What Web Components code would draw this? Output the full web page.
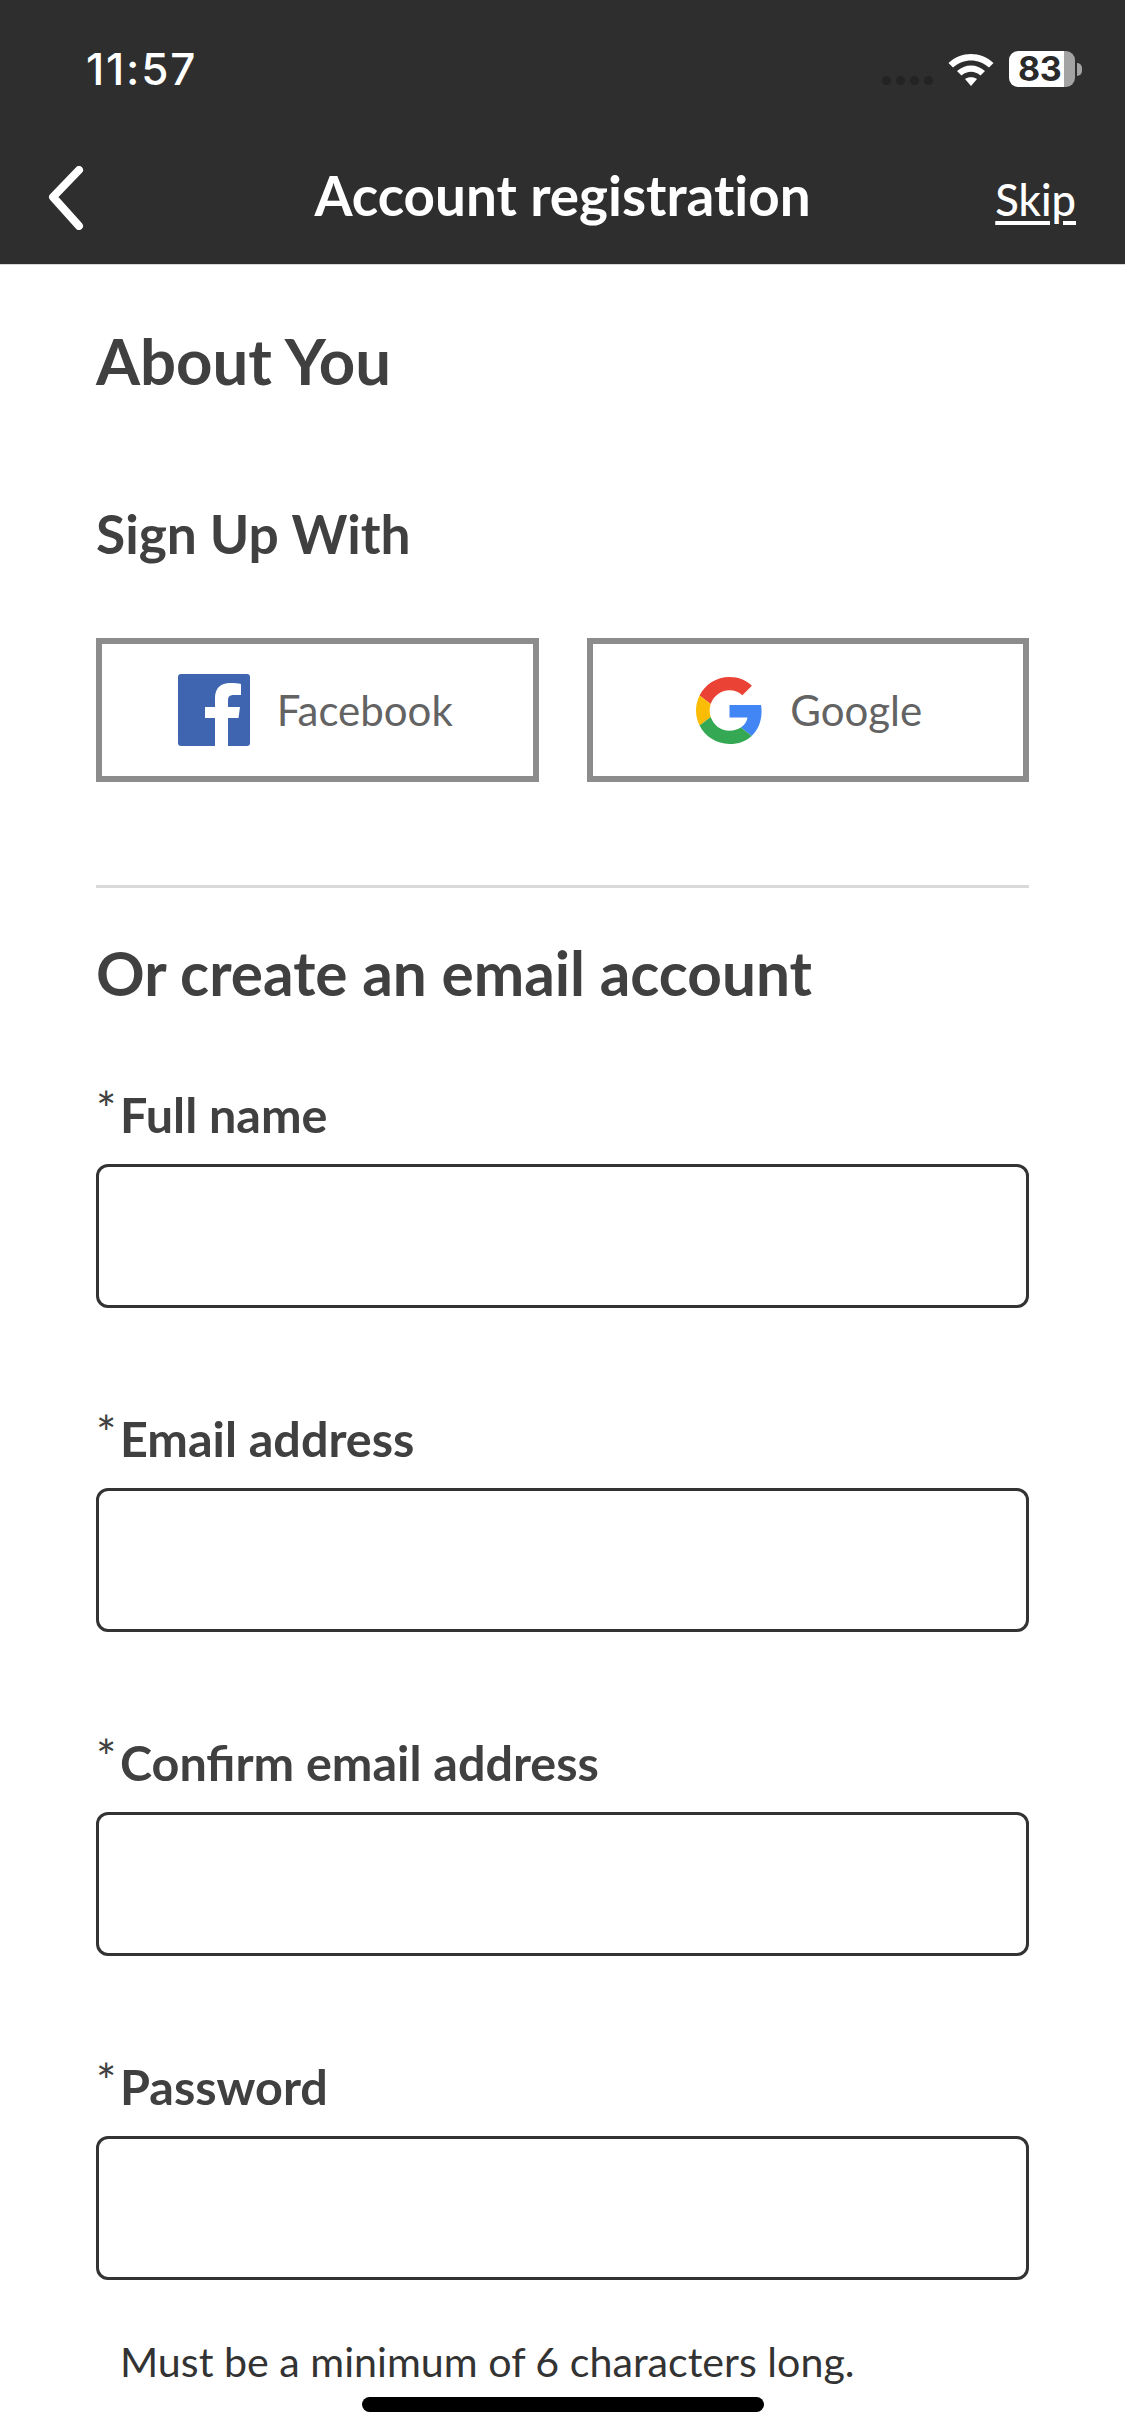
<!DOCTYPE html>
<html lang="en"><head><meta charset="utf-8"><title>Account registration</title>
<style>
html,body{margin:0;padding:0;background:#fff}
body{width:1125px;height:2436px;overflow:hidden;font-family:Lato,"Open Sans",sans-serif;color:#3d3d3d;position:relative}
</style></head><body>
<app-header title="Account registration" action="Skip" time="11:57" battery="83"></app-header>
<page-main>
  <section-title level="1">About You</section-title>
  <section-title level="2">Sign Up With</section-title>
  <social-row>
    <social-button name="facebook">Facebook</social-button>
    <social-button name="google">Google</social-button>
  </social-row>
  <h-divider></h-divider>
  <section-title level="3">Or create an email account</section-title>
  <form-field>Full name</form-field>
  <form-field>Email address</form-field>
  <form-field>Confirm email address</form-field>
  <form-field hint="Must be a minimum of 6 characters long.">Password</form-field>
</page-main>
<home-indicator></home-indicator>
<script>
function def(name,css,html){
  customElements.define(name,class extends HTMLElement{
    constructor(){super();this.attachShadow({mode:'open'});}
    connectedCallback(){
      const h=typeof html==='function'?html(this):html;
      this.shadowRoot.innerHTML='<style>'+css+'</style>'+h;
    }
  });
}
def('app-header',`
:host{display:block;background:#2e2e2e;height:264px;border-bottom:1px solid #d8d8d8;color:#fff;font-family:Lato,sans-serif}
.status{height:132px;box-sizing:border-box;padding:44px 43px 0 86px;display:flex;justify-content:space-between;align-items:flex-start}
.time{font:500 44px/50px Inter,Roboto,sans-serif;letter-spacing:1.8px}
.icons{display:flex;align-items:flex-start;padding-top:7px}
.dots{display:flex;gap:5px;margin:25px 15px 0 0}
.dots i{width:9px;height:9px;border-radius:50%;background:#232323;display:block}
.wifi{width:46px;height:33px;margin:2px 15px 0 0}
.batt{width:66px;height:36px;border-radius:9px;background:linear-gradient(90deg,#fff 0 55px,#a3a3a3 55px);color:#2a2a2a;font:700 34px/36px Inter,sans-serif;padding-left:9px;box-sizing:border-box;letter-spacing:-.5px;white-space:nowrap}
.nub{width:5px;height:13px;margin:12px 0 0 2px;background:#a3a3a3;border-radius:0 6px 6px 0}
.nav{height:132px;display:grid;grid-template-columns:1fr auto 1fr;align-items:start;padding:0 49px}
.back{width:38px;height:64px;margin:34px 0 0 -3px}
.title{font:700 54.800px/66px Lato,sans-serif;font-variant-ligatures:none;margin-top:30px;white-space:nowrap}
.skip{justify-self:end;font:500 43.500px/50px Lato,sans-serif;text-decoration:underline;text-underline-offset:5px;margin-top:42px}
`,t=>`<div class="status"><span class="time">${t.getAttribute('time')}</span>
<div class="icons"><div class="dots"><i></i><i></i><i></i><i></i></div>
<svg class="wifi" viewBox="0 0 46 33"><path d="M0.500 10C13-2 33-2 45.500 10L41 14.500C30.500 5 15.500 5 5 14.500Z" fill="#fff"/><path d="M9 18C17 10.500 29 10.500 37 18L32.500 22.500C26.500 17.500 19.500 17.500 13.500 22.500Z" fill="#fff"/><path d="M17 26C20 23.500 26 23.500 29 26L23 33Z" fill="#fff"/></svg>
<div class="batt">${t.getAttribute('battery')}</div><div class="nub"></div></div></div>
<div class="nav"><svg class="back" viewBox="0 0 38 64"><path d="M33 4 7 31 33 60" fill="none" stroke="#fff" stroke-width="8" stroke-linecap="round" stroke-linejoin="round"/></svg>
<span class="title">${t.getAttribute('title')}</span><span class="skip">${t.getAttribute('action')}</span></div>`);
def('page-main',`:host{display:block;padding:0 96px;font-family:Lato,sans-serif}`,`<slot></slot>`);
def('section-title',`
:host{display:block;font-family:Lato,sans-serif;font-weight:700;color:#404040}
:host([level="1"]){font-size:63.500px;line-height:76px;margin-top:58px}
:host([level="2"]){font-size:53.300px;line-height:62px;margin-top:103px}
:host([level="3"]){font-size:60.300px;line-height:70px;margin-top:50px;margin-bottom:78px}
`,`<slot></slot>`);
def('social-row',`:host{display:grid;grid-template-columns:1fr 1fr;gap:48px;margin-top:74px}`,`<slot></slot>`);
const icons={
facebook:`<svg class="fb" viewBox="0 0 72 72"><rect width="72" height="72" rx="3" fill="#3f65b0"/><path d="M37 72V44H27V33H37V24C37 14 43 9 52 9C57 9 60 9.300 63 10V21H56C51 21 50 23 50 27V33H62L60.500 44H50V72Z" fill="#fff"/></svg>`,
google:`<svg class="g" viewBox="0 0 48 48"><path fill="#EA4335" d="M24 9.500c3.540 0 6.710 1.220 9.210 3.600l6.850-6.850C35.900 2.380 30.470 0 24 0 14.620 0 6.510 5.380 2.560 13.220l7.980 6.190C12.430 13.720 17.740 9.500 24 9.500z"/><path fill="#4285F4" d="M46.980 24.550c0-1.570-.15-3.090-.38-4.550H24v9.020h12.940c-.58 2.960-2.260 5.480-4.780 7.180l7.730 6c4.510-4.180 7.090-10.360 7.090-17.650z"/><path fill="#FBBC05" d="M10.530 28.590c-.48-1.450-.76-2.990-.76-4.590s.27-3.140.76-4.590l-7.980-6.190C.92 16.460 0 20.120 0 24c0 3.880.92 7.540 2.560 10.780l7.970-6.190z"/><path fill="#34A853" d="M24 48c6.480 0 11.930-2.130 15.890-5.810l-7.730-6c-2.150 1.450-4.920 2.300-8.160 2.300-6.260 0-11.570-4.220-13.470-9.910l-7.980 6.190C6.510 42.620 14.620 48 24 48z"/></svg>`};
def('social-button',`
:host{display:flex;align-items:center;justify-content:center;height:144px;box-sizing:border-box;border:6px solid #8c8c8c;background:#fff;font:400 42px/50px Lato,sans-serif;color:#636363}
svg{filter:blur(.5px)}
.fb{width:72px;height:72px;margin:0 27px 0 -4px}
.g{width:67px;height:67px;margin:0 27px 0 3px}
`,t=>icons[t.getAttribute('name')]+`<slot></slot>`);
def('h-divider',`:host{display:block;height:3px;background:#d9d9d9;margin-top:103px}`,``);
def('form-field',`
:host{display:block;font-family:Lato,sans-serif;color:#404040;margin-bottom:102px}
.label{display:flex;align-items:flex-start;height:60px;font-size:48.500px;font-weight:700;line-height:56px;margin-bottom:18px}
.star{width:24px;font-size:48px;font-weight:400;line-height:46px}
.box{display:block;height:144px;box-sizing:border-box;border:3px solid #333;border-radius:12px;background:#fff}
.hint{font:400 41.200px/50px Lato,sans-serif;color:#333;margin:56px 0 0 24px;white-space:nowrap}
`,t=>`<div class="label"><span class="star">*</span><span><slot></slot></span></div><div class="box"></div>${t.getAttribute('hint')?`<div class="hint">${t.getAttribute('hint')}</div>`:''}`);
def('home-indicator',`:host{position:absolute;left:362px;top:2397px;width:402px;height:15px;border-radius:8px;background:#000}`,``);
</script>
</body></html>
